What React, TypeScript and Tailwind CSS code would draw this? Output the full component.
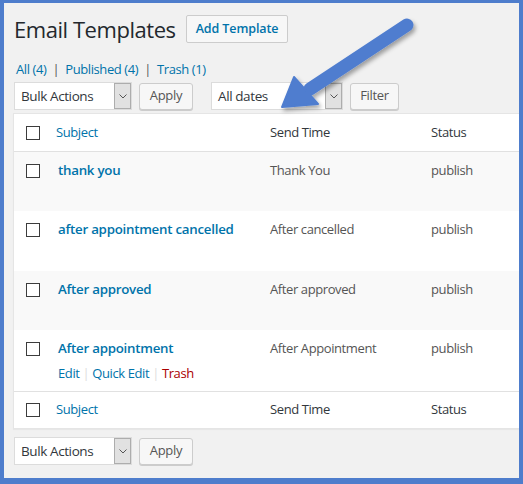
import React from 'react';

const rows = [
  { title: 'thank you', send: 'Thank You', status: 'publish', alt: true, h: 'h-[59px]' },
  { title: 'after appointment cancelled', send: 'After cancelled', status: 'publish', alt: false, h: 'h-[60px]' },
  { title: 'After approved', send: 'After approved', status: 'publish', alt: true, h: 'h-[59px]' },
  { title: 'After appointment', send: 'After Appointment', status: 'publish', alt: false, h: 'h-[61px]', actions: true },
];

const Checkbox = () => <div className="w-[14px] h-[14px] border border-[#3c3c3c] bg-white" />;

const Select = ({ label, width }: { label: string; width: string }) => (
  <div className={`flex h-[28px] bg-white border border-[#dcdcdc] ${width}`}>
    <div className="flex-1 pl-[6px] flex items-center text-[13.5px] tracking-[-0.4px] text-[#32373c]">{label}</div>
    <div className="w-[17px] bg-[#e1e1e1] border border-[#adadad] flex items-center justify-center">
      <svg width="8" height="5" viewBox="0 0 8 5">
        <path d="M0.5 0.5 L4 4 L7.5 0.5" fill="none" stroke="#555" strokeWidth="1" />
      </svg>
    </div>
  </div>
);

const Btn = ({ children, w }: { children: React.ReactNode; w: string }) => (
  <div className={`h-[27px] ${w} flex items-center justify-center bg-[#f7f7f7] border border-[#cccccc] rounded-[3px] shadow-[0_1px_0_#cccccc] text-[13px] tracking-[-0.3px] text-[#555]`}>
    {children}
  </div>
);

const Arrow = () => (
  <svg className="absolute left-0 top-0 pointer-events-none" width="523" height="484" viewBox="0 0 523 484">
    <defs>
      <filter id="sh" x="-20%" y="-20%" width="140%" height="140%">
        <feDropShadow dx="2" dy="3" stdDeviation="2" floodColor="#000" floodOpacity="0.35" />
      </filter>
    </defs>
    <g filter="url(#sh)" fill="#4f7dcf" stroke="#4f7dcf">
      <line x1="407" y1="25" x2="310" y2="89" strokeWidth="13" strokeLinecap="round" />
      <polygon points="282,107 294,77 318,104" strokeWidth="2" strokeLinejoin="round" />
    </g>
  </svg>
);

export default function App() {
  return (
    <div className="relative w-[523px] h-[484px] bg-[#4e7dcc] pt-[3px] pl-[4px] pr-[4px] pb-[6px] font-['Open_Sans',sans-serif]">
      <div className="h-full bg-[#f1f1f1] overflow-hidden pl-[9px]">
        <div className="flex items-center gap-[10px] pt-[12px] pl-[1px]">
          <h1 className="text-[22px] leading-[28px] text-[#23282d] tracking-[-0.45px]">Email Templates</h1>
          <div className="h-[28px] px-[9px] flex items-center bg-[#f7f7f7] border border-[#cccccc] rounded-[2px] text-[12.5px] font-semibold text-[#0073aa] tracking-[-0.1px]">
            Add Template
          </div>
        </div>

        <div className="mt-[17px] pl-[3px] text-[13px] leading-[18px] tracking-[-0.4px] text-[#0073aa] flex gap-[6px]">
          <span>All (4)</span>
          <span className="text-[#555]">|</span>
          <span>Published (4)</span>
          <span className="text-[#555]">|</span>
          <span>Trash (1)</span>
        </div>

        <div className="mt-[4px] flex items-center pl-[1px]">
          <Select label="Bulk Actions" width="w-[118px]" />
          <div className="ml-[7px]"><Btn w="w-[54px]">Apply</Btn></div>
          <div className="ml-[18px]"><Select label="All dates" width="w-[132px]" /></div>
          <div className="ml-[7px]"><Btn w="w-[49px]">Filter</Btn></div>
        </div>

        <div className="mt-[3px] w-[520px] bg-white border border-[#e5e5e5] shadow-[0_1px_1px_rgba(0,0,0,0.04)] text-[13px] tracking-[-0.4px]">
          <div className="h-[38px] grid grid-cols-[42px_214px_161px_1fr] items-center border-b border-[#e1e1e1] text-[#32373c]">
            <div className="pl-[12px]"><Checkbox /></div>
            <div className="text-[#0073aa]">Subject</div>
            <div>Send Time</div>
            <div>Status</div>
          </div>

          {rows.map((r) => (
            <div
              key={r.title}
              className={`${r.h} grid grid-cols-[42px_214px_161px_1fr] pt-[9px] ${r.alt ? 'bg-[#f9f9f9]' : 'bg-white'}`}
            >
              <div className="pl-[12px] pt-[3px]"><Checkbox /></div>
              <div className="pl-[2px]">
                <div className="text-[13.3px] leading-[19px] font-semibold text-[#0073aa] tracking-[-0.25px]">{r.title}</div>
                {r.actions && (
                  <div className="mt-[6px] flex items-center gap-[3px] text-[13px] leading-[18px]">
                    <span className="text-[#0073aa]">Edit</span>
                    <span className="text-[#ddd]">|</span>
                    <span className="text-[#0073aa]">Quick Edit</span>
                    <span className="text-[#ddd]">|</span>
                    <span className="text-[#a00]">Trash</span>
                  </div>
                )}
              </div>
              <div className="text-[#555] leading-[19px]">{r.send}</div>
              <div className="text-[#555] leading-[19px]">{r.status}</div>
            </div>
          ))}

          <div className="h-[37px] grid grid-cols-[42px_214px_161px_1fr] items-center border-t border-[#e1e1e1] text-[#32373c]">
            <div className="pl-[12px]"><Checkbox /></div>
            <div className="text-[#0073aa]">Subject</div>
            <div>Send Time</div>
            <div>Status</div>
          </div>
        </div>

        <div className="mt-[8px] flex items-center pl-[1px]">
          <Select label="Bulk Actions" width="w-[118px]" />
          <div className="ml-[7px]"><Btn w="w-[54px]">Apply</Btn></div>
        </div>
      </div>
      <Arrow />
    </div>
  );
}
